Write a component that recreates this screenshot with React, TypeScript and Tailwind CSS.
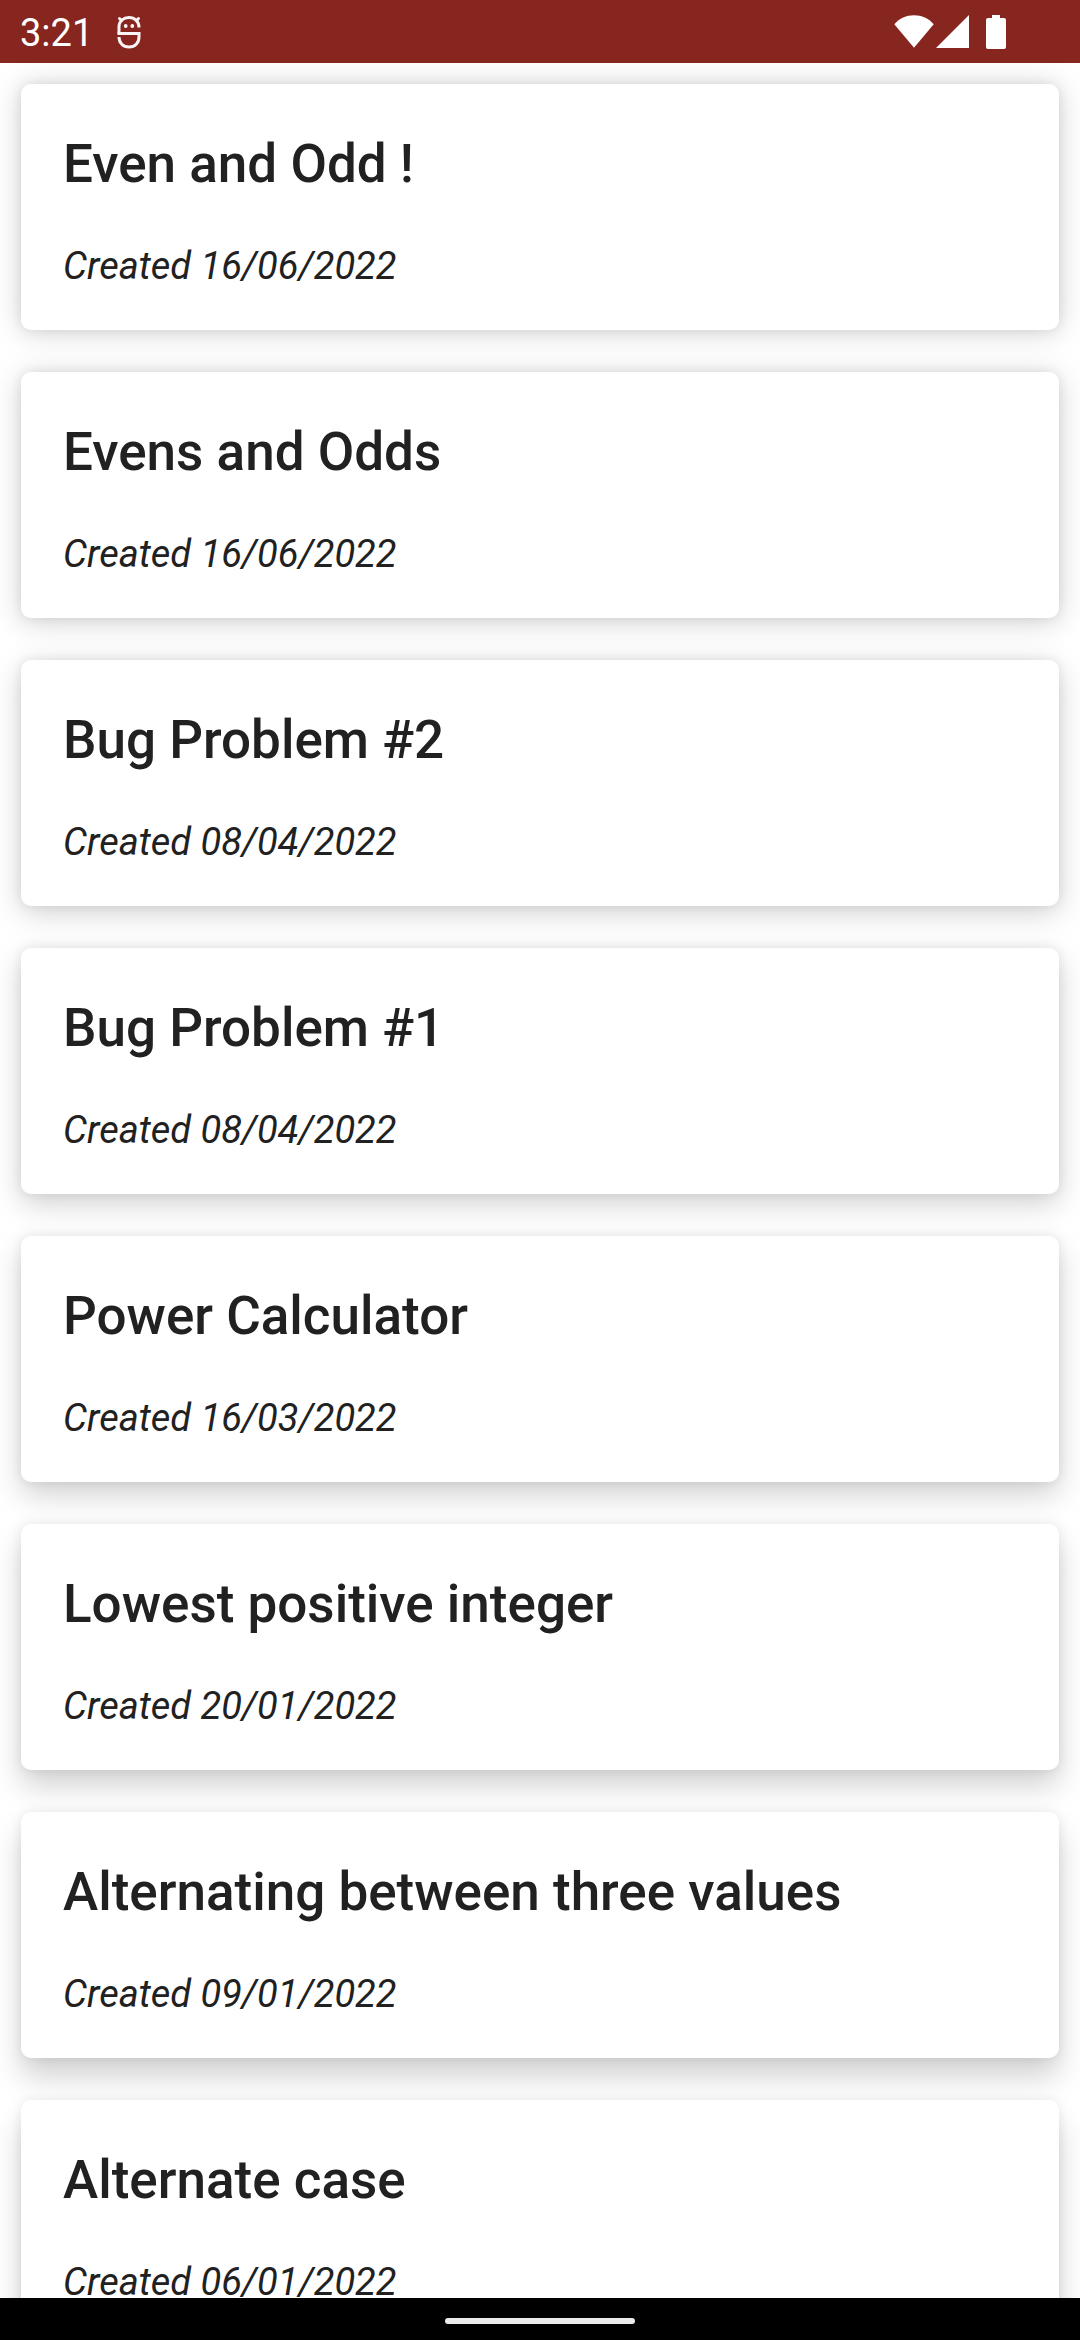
type Problem = { title: string; created: string; shadow: string };

// Shadows deepen toward the bottom of the screen, as under an overhead light.
const problems: Problem[] = [
  { title: "Even and Odd !", created: "16/06/2022", shadow: "shadow-[0_0_12px_rgba(0,0,0,0.08),0_2px_30px_rgba(0,0,0,0.18)]" },
  { title: "Evens and Odds", created: "16/06/2022", shadow: "shadow-[0_0_12px_rgba(0,0,0,0.08),0_4px_30px_rgba(0,0,0,0.18)]" },
  { title: "Bug Problem #2", created: "08/04/2022", shadow: "shadow-[0_0_12px_rgba(0,0,0,0.08),0_7px_30px_rgba(0,0,0,0.18)]" },
  { title: "Bug Problem #1", created: "08/04/2022", shadow: "shadow-[0_0_12px_rgba(0,0,0,0.08),0_10px_30px_rgba(0,0,0,0.18)]" },
  { title: "Power Calculator", created: "16/03/2022", shadow: "shadow-[0_0_12px_rgba(0,0,0,0.08),0_13px_30px_rgba(0,0,0,0.18)]" },
  { title: "Lowest positive integer", created: "20/01/2022", shadow: "shadow-[0_0_12px_rgba(0,0,0,0.08),0_16px_30px_rgba(0,0,0,0.18)]" },
  { title: "Alternating between three values", created: "09/01/2022", shadow: "shadow-[0_0_12px_rgba(0,0,0,0.08),0_19px_30px_rgba(0,0,0,0.18)]" },
  { title: "Alternate case", created: "06/01/2022", shadow: "shadow-[0_0_12px_rgba(0,0,0,0.08),0_22px_30px_rgba(0,0,0,0.18)]" },
];

function DebugIcon() {
  return (
    <svg viewBox="0 0 24 34" className="h-[34px] w-6" fill="none" stroke="#fbf5f5" strokeWidth="3" aria-hidden="true">
      <path d="M2 18.500V12C2 6 6.500 2.500 12 2.500S22 6 22 12.500" />
      <path d="M4.500 5.500 2.500 3.500M19.500 5.500l2-2" strokeLinecap="round" />
      <path d="M.5 18.500H22V22C22 28 18 32 12 32S2 28 2 22" />
      <circle cx="8.700" cy="11" r="1.900" fill="#fbf5f5" stroke="none" />
      <circle cx="15.300" cy="11" r="1.900" fill="#fbf5f5" stroke="none" />
    </svg>
  );
}

function StatusBar() {
  return (
    <header className="flex h-[63px] shrink-0 items-center justify-between bg-[#86261f] pr-[74px] pl-5 text-white">
      <div className="flex items-center gap-6">
        <time className="pt-0.5 text-[38px] leading-[44px]">3:21</time>
        <DebugIcon />
      </div>
      <div className="flex items-center">
        <svg viewBox="0 0 40 34" className="h-[34px] w-10" fill="currentColor" aria-label="Wi-Fi">
          <path d="M.3 9.200C5.500 3.500 12.300.3 20 .3s14.500 3.200 19.700 8.900L20 32.700Z" />
        </svg>
        <svg viewBox="0 0 34 34" className="ml-0.5 h-[34px] w-[34px]" fill="currentColor" aria-label="Signal">
          <path d="M33 0v33H0Z" />
        </svg>
        <svg viewBox="0 0 20 34" className="ml-4 h-[34px] w-5" fill="currentColor" aria-label="Battery">
          <path d="M6 0h8v3h4a2 2 0 0 1 2 2v27a2 2 0 0 1-2 2H2a2 2 0 0 1-2-2V5a2 2 0 0 1 2-2h4Z" />
        </svg>
      </div>
    </header>
  );
}

function ProblemCard({ title, created, shadow }: Problem) {
  return (
    <li className={`flex shrink-0 flex-col gap-12 rounded-[10px] bg-white px-[42px] pt-12 pb-[42px] ${shadow}`}>
      <h2 className="text-[53px] leading-[64px] font-medium">{title}</h2>
      <p className="text-[38px] leading-[44px] italic">Created {created}</p>
    </li>
  );
}

export default function App() {
  return (
    <div className="flex h-screen flex-col bg-white font-['Roboto',sans-serif] text-[#212121]">
      <StatusBar />
      <main className="min-h-0 flex-1 overflow-hidden">
        <ul className="flex flex-col gap-[42px] p-[21px]">
          {problems.map((problem) => (
            <ProblemCard key={problem.title} {...problem} />
          ))}
        </ul>
      </main>
      <footer className="flex h-[42px] shrink-0 items-center justify-center bg-black pt-1">
        <div className="h-1.5 w-[190px] rounded-full bg-[#ebebeb]" />
      </footer>
    </div>
  );
}
